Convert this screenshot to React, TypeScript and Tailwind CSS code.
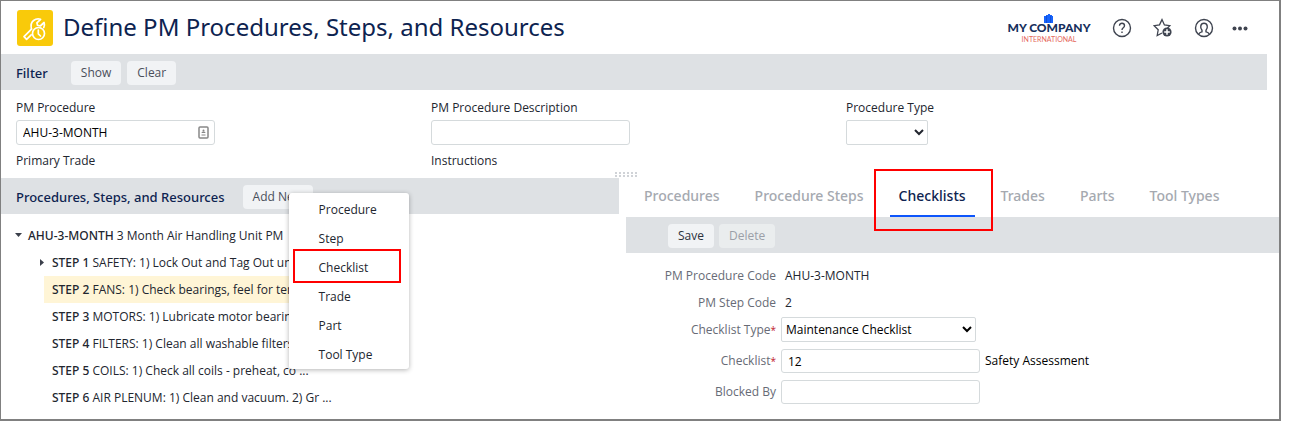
import React, { useState } from 'react';

interface Step {
  code: string;
  text: string;
  expandable?: boolean;
}

const STEPS: Step[] = [
  { code: 'STEP 1', text: 'SAFETY: 1) Lock Out and Tag Out uni ...', expandable: true },
  { code: 'STEP 2', text: 'FANS: 1) Check bearings, feel for tem ...' },
  { code: 'STEP 3', text: 'MOTORS: 1) Lubricate motor bearing ...' },
  { code: 'STEP 4', text: 'FILTERS: 1) Clean all washable filters. ...' },
  { code: 'STEP 5', text: 'COILS: 1) Check all coils - preheat, co ...' },
  { code: 'STEP 6', text: 'AIR PLENUM: 1) Clean and vacuum. 2) Gr ...' },
];

const TABS = ['Procedures', 'Procedure Steps', 'Checklists', 'Trades', 'Parts', 'Tool Types'];
const MENU = ['Procedure', 'Step', 'Checklist', 'Trade', 'Part', 'Tool Type'];

const headingFont = "font-['Noto_Sans',sans-serif]";
const inputClass = 'w-[199px] rounded-[3px] border border-[#d5dadc] bg-white px-[6px] text-black';

const BarButton: React.FC<{ label: string; disabled?: boolean; dark?: boolean }> = ({ label, disabled, dark }) => (
  <button
    disabled={disabled}
    className={`h-6 rounded-[4px] px-[10px] ${
      disabled ? 'bg-[#eaedee] text-[#9b9fa8]' : dark ? 'bg-[#f1f3f5] text-[#2c313c]' : 'bg-[#f1f3f5] text-[#4a4f5b]'
    }`}
  >
    {label}
  </button>
);

const AppIcon = () => (
  <svg className="size-9 rounded-[3px] bg-[#f9ca0a]" viewBox="0 0 36 36" fill="none" stroke="#fff" strokeWidth="1.700" strokeLinejoin="round" strokeLinecap="round">
    <path d="M14.500 19.200 7 26.600l2.600 2.700 4.600-4.500" />
    <path d="M14.500 19.200c-.9-3.800-.2-7 2.100-8.700 2-1.500 4.600-1.900 7-1.200l-3.700 3.500.6 2.500 2.800.7 3.800-3.500c.6 1.700.4 3.500-.3 5" />
    <circle cx="21.500" cy="23.500" r="6" />
    <path d="M21.300 20v3.800l2.200 2.200" />
  </svg>
);

const CompanyLogo = () => (
  <svg width="84" height="32" viewBox="0 0 84 32" role="img" aria-label="My Company International">
    <path d="M37 4h2v-1h2V2h2v1h2v1h1v7h-9z" fill="#1763fb" />
    <path d="M39.500 4v7M43.500 4v7" stroke="#0b42c4" strokeWidth=".6" />
    <text x="42" y="20" textAnchor="middle" fill="#17305d" fontFamily="Lato, sans-serif" fontWeight="900" fontSize="12">MY COMPANY</text>
    <text x="42" y="30" textAnchor="middle" fill="#e5695d" fontFamily="Lato, sans-serif" fontSize="7">INTERNATIONAL</text>
  </svg>
);

const HeaderIcons = () => (
  <div className="flex items-center gap-[21px] text-[#3f4450]">
    <button aria-label="Help">
      <svg width="20" height="20" viewBox="0 0 20 20" fill="none" stroke="currentColor" strokeWidth="1.400">
        <circle cx="10" cy="10" r="8.500" />
        <path d="M7.500 7.700c0-3.300 5-3.200 5 0 0 2-2.500 2-2.500 4.200M10 13.500v1.500" />
      </svg>
    </button>
    <button aria-label="Add to favorites">
      <svg width="20" height="20" viewBox="0 0 20 20" fill="none" stroke="currentColor" strokeWidth="1.300">
        <path d="M9 15 4.200 17.500l1-5.700L1.200 7.700l5.300-.8L9 1.600l2.400 5.300 5.400.8-2.300 2.300" />
        <circle cx="14" cy="14" r="4.600" fill="currentColor" stroke="none" />
        <path d="M14 11.200v5.600M11.200 14h5.600" stroke="#fff" strokeWidth="1.500" />
      </svg>
    </button>
    <button aria-label="Account">
      <svg width="20" height="20" viewBox="0 0 20 20" fill="none" stroke="currentColor" strokeWidth="1.400">
        <circle cx="10" cy="10" r="8.500" />
        <path d="M4.800 16c.3-1.300 1.400-1.600 3.200-2.200v-1.600C5.800 9.800 6.300 5.200 10 5.200s4.200 4.600 2 7v1.600c1.800.6 2.900.9 3.200 2.200" />
      </svg>
    </button>
    <button aria-label="More" className="-ml-[3px]">
      <svg width="16" height="20" viewBox="0 0 16 20" fill="currentColor">
        <circle cx="2.500" cy="10.500" r="2" />
        <circle cx="8" cy="10.500" r="2" />
        <circle cx="13.500" cy="10.500" r="2" />
      </svg>
    </button>
  </div>
);

const AddMenu = () => (
  <div role="menu" className="absolute left-[46px] top-2 z-10 w-[120px] rounded-[3px] bg-white pt-[2px] shadow-[0_1px_5px_rgba(0,0,0,0.3)]">
    {MENU.map((item) => (
      <button key={item} role="menuitem" className="relative flex h-[29px] w-full items-center pl-[30px] text-[#22262f]">
        {item}
        {item === 'Checklist' && (
          <span className="pointer-events-none absolute -bottom-px -top-1 left-1 right-2 border-2 border-[#f00]" />
        )}
      </button>
    ))}
  </div>
);

const FormLabel: React.FC<{ id?: string; required?: boolean; children: React.ReactNode }> = ({ id, required, children }) => (
  <label htmlFor={id} className="w-[150px] text-right text-[#676b76]">
    {children}
    {required && <span className="text-[10px] text-[#c0202c]">*</span>}
  </label>
);

const App: React.FC = () => {
  const [tab, setTab] = useState('Checklists');

  return (
    <div className="mr-[9px] border-b-2 border-l border-r-2 border-t border-[#808080] bg-white font-['Open_Sans',sans-serif] text-[12px] leading-4 text-[#22262f]">
      <header className="flex h-[53px] items-center pl-4 pr-[31px]">
        <AppIcon />
        <h1 className={`${headingFont} ml-[10px] flex-1 pb-[2px] text-[24px] leading-8 text-[#0d2350]`}>Define PM Procedures, Steps, and Resources</h1>
        <div className="flex items-center gap-[21px]">
          <CompanyLogo />
          <HeaderIcons />
        </div>
      </header>

      <div className="mr-3 flex h-9 items-center bg-[#dee1e4] pl-[15px] pt-[2px]">
        <h2 className={`${headingFont} mr-[23px] text-[13px] font-medium text-[#0d2350]`}>Filter</h2>
        <div className="flex gap-[6px]">
          <BarButton label="Show" />
          <BarButton label="Clear" />
        </div>
      </div>

      {/* Filter fields */}
      <div className="grid h-[88px] grid-cols-3 pl-[15px] pr-[18px] pt-[10px]">
        <div>
          <label htmlFor="proc" className="block">PM Procedure</label>
          <div className="relative mt-1 w-[199px]">
            <input id="proc" defaultValue="AHU-3-MONTH" className={`${inputClass} block h-[25px]`} />
            <svg className="absolute right-[6px] top-[6px]" width="11" height="13" viewBox="0 0 11 13" fill="none" stroke="#888">
              <rect x="1" y="1" width="9" height="11" rx="1" strokeWidth="1.500" />
              <path d="M3.500 9h4" />
              <circle cx="5.500" cy="4.500" r="1" fill="#888" stroke="none" />
              <path d="M3.500 7c0-2 4-2 4 0z" fill="#888" stroke="none" />
            </svg>
          </div>
          <div className="mt-2">Primary Trade</div>
        </div>
        <div>
          <label htmlFor="desc" className="block">PM Procedure Description</label>
          <input id="desc" className={`${inputClass} mt-1 block h-[25px]`} />
          <div className="mt-2">Instructions</div>
        </div>
        <div>
          <label htmlFor="ptype" className="block">Procedure Type</label>
          <select id="ptype" className="mt-1 block h-[25px] w-[82px] rounded-[2px] border border-[#d5dadc] bg-white">
            <option></option>
          </select>
        </div>
      </div>

      <div className="flex gap-[7px] pb-2">
        {/* Left: procedure tree */}
        <section className="flex-[618]">
          <div className="flex h-9 items-center bg-[#dee1e4] pl-[15px] pt-[2px]">
            <h2 className={`${headingFont} mr-[18px] text-[13px] font-medium text-[#0d2350]`}>Procedures, Steps, and Resources</h2>
            <div className="relative">
              <BarButton label="Add New" />
              <AddMenu />
            </div>
          </div>
          <div className="w-[350px] pt-2">
            <div className="flex h-[27px] items-center pl-[14px]">
              <svg className="mr-[6px]" width="7" height="5" viewBox="0 0 7 5" fill="#3b404b"><path d="M0 0h7L3.500 4z" /></svg>
              <span><span className={`${headingFont} font-medium`}>AHU-3-MONTH</span> 3 Month Air Handling Unit PM</span>
            </div>
            {STEPS.map((s) => (
              <div key={s.code} className={`relative ml-[43px] flex h-[27px] items-center pl-2 ${s.code === 'STEP 2' ? 'bg-[#fff5d6]' : ''}`}>
                {s.expandable && (
                  <svg className="absolute -left-1" width="5" height="7" viewBox="0 0 5 7" fill="#3b404b"><path d="M0 0v7l4-3.500z" /></svg>
                )}
                <span className="whitespace-nowrap"><span className={`${headingFont} font-medium`}>{s.code}</span> {s.text}</span>
              </div>
            ))}
          </div>
        </section>

        {/* Right: tabs and edit form */}
        <section className="relative flex-[653]">
          <svg className="absolute -left-[11px] -top-[6px]" width="22" height="6" viewBox="0 0 22 6" fill="#d0d3d7">
            {[0, 4, 8, 12, 16, 20].map((x) => (
              <React.Fragment key={x}>
                <rect x={x} y="0" width="2" height="2" />
                <rect x={x} y="3" width="2" height="2" />
              </React.Fragment>
            ))}
          </svg>
          <nav className={`${headingFont} flex h-[39px] gap-[17px] pl-[9px] text-[14px]`}>
            {TABS.map((t) => (
              <button
                key={t}
                onClick={() => setTab(t)}
                className={`relative border-b-2 px-[9px] pb-px font-medium ${
                  t === tab ? 'border-[#0d55fb] text-[#0d2350]' : 'border-transparent text-[#a5a9b0]'
                }`}
              >
                {t}
                {t === 'Checklists' && (
                  <span className="pointer-events-none absolute -bottom-4 -left-4 -right-[18px] -top-[9px] border-2 border-[#f00]" />
                )}
              </button>
            ))}
          </nav>
          <div className="flex h-9 items-center gap-[5px] bg-[#dee1e4] pl-[42px] pt-[2px]">
            <BarButton label="Save" dark />
            <BarButton label="Delete" disabled />
          </div>
          <div className="pt-[9px]">
            <div className="flex h-[27px] items-center gap-[9px]">
              <FormLabel>PM Procedure Code</FormLabel>
              <span>AHU-3-MONTH</span>
            </div>
            <div className="flex h-[27px] items-center gap-[9px]">
              <FormLabel>PM Step Code</FormLabel>
              <span>2</span>
            </div>
            <div className="flex h-[27px] items-center gap-[5px]">
              <FormLabel id="ctype" required>Checklist Type</FormLabel>
              <select id="ctype" className="h-[25px] w-[195px] rounded-[2px] border border-[#d5dadc] bg-white text-black">
                <option>Maintenance Checklist</option>
              </select>
            </div>
            <div className="mt-[6px] flex items-center gap-[5px]">
              <FormLabel id="checklist" required>Checklist</FormLabel>
              <input id="checklist" defaultValue="12" className={`${inputClass} h-6`} />
              <span className="text-black">Safety Assessment</span>
            </div>
            <div className="mt-[7px] flex items-center gap-[5px]">
              <FormLabel id="blocked">Blocked By</FormLabel>
              <input id="blocked" className={`${inputClass} h-6`} />
            </div>
          </div>
        </section>
      </div>
    </div>
  );
};

export default App;
